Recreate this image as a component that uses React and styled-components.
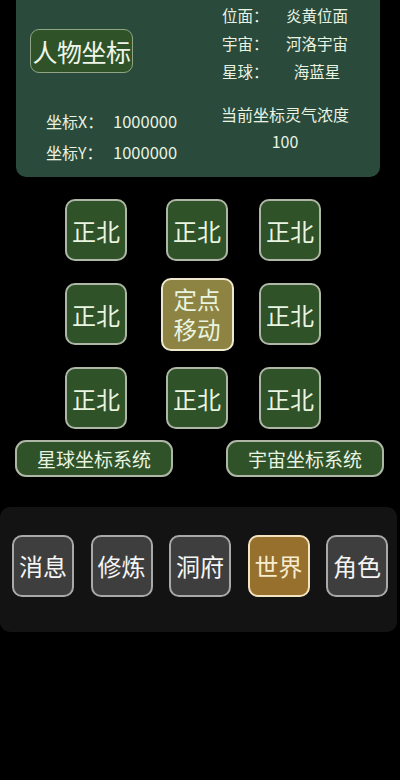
import React from "react"
import styled, { createGlobalStyle } from "styled-components"

const GlobalStyle = createGlobalStyle`
  html, body {
    margin: 0;
    padding: 0;
    background: #000;
  }
  body {
    font-family: "Noto Sans CJK SC", "Noto Sans", sans-serif;
    color: #e9f3e2;
  }
`

const colors = {
  panel: "#2a4a3b",
  green: "#2f5229",
  greenBorder: "#aeb7a6",
  olive: "#8d8342",
  oliveBorder: "#efe8cf",
  gray: "#3e3e3e",
  grayBorder: "#a9a9a9",
  gold: "#96702c",
  goldBorder: "#f3e4bf",
  nav: "#131313",
}

const Page = styled.div`
  width: 400px;
  min-height: 780px;
  background: #000;
  display: flex;
  flex-direction: column;
`

const InfoPanel = styled.div`
  margin: 0 20px 0 16px;
  height: 177px;
  background: ${colors.panel};
  border-radius: 0 0 10px 10px;
  display: grid;
  grid-template-columns: 190px 1fr;
  grid-template-rows: 98px 1fr;
`

const TitleCell = styled.div`
  padding: 29px 0 0 14px;
`

const TitleButton = styled.div`
  width: 103px;
  height: 44px;
  box-sizing: border-box;
  border: 1.5px solid #8fa585;
  border-radius: 9px;
  background: ${colors.green};
  display: flex;
  align-items: center;
  justify-content: center;
  font-size: 25px;
  color: #eef5e8;
  letter-spacing: -0.5px;
`

const WorldList = styled.div`
  padding: 1px 0 0 16px;
  display: flex;
  flex-direction: column;
`

const WorldRow = styled.div`
  height: 28px;
  display: flex;
  align-items: center;
  font-size: 15.5px;
`

const WorldLabel = styled.span`
  width: 62px;
`

const WorldValue = styled.span`
  width: 66px;
  text-align: center;
`

const CoordList = styled.div`
  padding: 7px 0 0 30px;
  display: flex;
  flex-direction: column;
`

const CoordRow = styled.div`
  height: 31px;
  display: flex;
  align-items: center;
  font-size: 16px;
`

const CoordLabel = styled.span`
  width: 67px;
`

const CoordValue = styled.span`
  font-size: 16.5px;
`

const Aura = styled.div`
  padding: 3px 16px 0 0;
  display: flex;
  flex-direction: column;
  align-items: center;
  font-size: 16px;
  line-height: 27px;
`

const DirGrid = styled.div`
  margin-top: 16px;
  padding-left: 46px;
  display: grid;
  grid-template-columns: 100px 102px 84px;
  grid-auto-rows: 74px;
  row-gap: 10px;
  justify-items: center;
  align-items: center;
`

const DirButton = styled.div`
  width: ${p => (p.$center ? 73 : 62)}px;
  height: ${p => (p.$center ? 73 : 62)}px;
  box-sizing: border-box;
  border-radius: 10px;
  border: 2px solid ${p => (p.$center ? colors.oliveBorder : colors.greenBorder)};
  background: ${p => (p.$center ? colors.olive : colors.green)};
  display: flex;
  flex-direction: column;
  align-items: center;
  justify-content: center;
  text-align: center;
  font-size: 24px;
  color: #e9f5e0;
`

const DirLine = styled.span`
  display: block;
  height: 30px;
  line-height: 30px;
  font-size: 23.5px;
`

const SystemRow = styled.div`
  margin-top: 5px;
  padding: 0 16px 0 15px;
  display: flex;
  justify-content: space-between;
`

const SystemButton = styled.div`
  width: 158px;
  height: 37px;
  box-sizing: border-box;
  border-radius: 11px;
  border: 2px solid ${colors.greenBorder};
  background: ${colors.green};
  display: flex;
  align-items: center;
  justify-content: center;
  font-size: 19px;
  color: #eaf4e2;
`

const NavPanel = styled.div`
  margin: 30px 3px 0 0;
  height: 125px;
  background: ${colors.nav};
  border-radius: 10px;
  display: flex;
  align-items: center;
  justify-content: space-between;
  padding: 0 9px 0 12px;
  box-sizing: border-box;
`

const NavButton = styled.div`
  width: 62px;
  height: 62px;
  box-sizing: border-box;
  border-radius: 10px;
  border: 2px solid ${p => (p.$active ? colors.goldBorder : colors.grayBorder)};
  background: ${p => (p.$active ? colors.gold : colors.gray)};
  display: flex;
  align-items: center;
  justify-content: center;
  font-size: 24px;
  color: ${p => (p.$active ? "#f7ecd0" : "#f4f4f4")};
  margin-top: -8px;
`

const worlds = [
  ["位面：", "炎黄位面"],
  ["宇宙：", "河洛宇宙"],
  ["星球：", "海蓝星"],
]

const dirs = [
  "正北", "正北", "正北",
  "正北", null, "正北",
  "正北", "正北", "正北",
]

const navs = ["消息", "修炼", "洞府", "世界", "角色"]

export default function App() {
  return (
    <Page>
      <GlobalStyle />
      <InfoPanel>
        <TitleCell>
          <TitleButton>人物坐标</TitleButton>
        </TitleCell>
        <WorldList>
          {worlds.map(([label, value]) => (
            <WorldRow key={label}>
              <WorldLabel>{label}</WorldLabel>
              <WorldValue>{value}</WorldValue>
            </WorldRow>
          ))}
        </WorldList>
        <CoordList>
          <CoordRow>
            <CoordLabel>坐标X：</CoordLabel>
            <CoordValue>1000000</CoordValue>
          </CoordRow>
          <CoordRow>
            <CoordLabel>坐标Y：</CoordLabel>
            <CoordValue>1000000</CoordValue>
          </CoordRow>
        </CoordList>
        <Aura>
          <span>当前坐标灵气浓度</span>
          <span>100</span>
        </Aura>
      </InfoPanel>

      <DirGrid>
        {dirs.map((d, i) =>
          d ? (
            <DirButton key={i}>{d}</DirButton>
          ) : (
            <DirButton key={i} $center>
              <DirLine>定点</DirLine>
              <DirLine>移动</DirLine>
            </DirButton>
          )
        )}
      </DirGrid>

      <SystemRow>
        <SystemButton>星球坐标系统</SystemButton>
        <SystemButton>宇宙坐标系统</SystemButton>
      </SystemRow>

      <NavPanel>
        {navs.map(n => (
          <NavButton key={n} $active={n === "世界"}>
            {n}
          </NavButton>
        ))}
      </NavPanel>
    </Page>
  )
}
